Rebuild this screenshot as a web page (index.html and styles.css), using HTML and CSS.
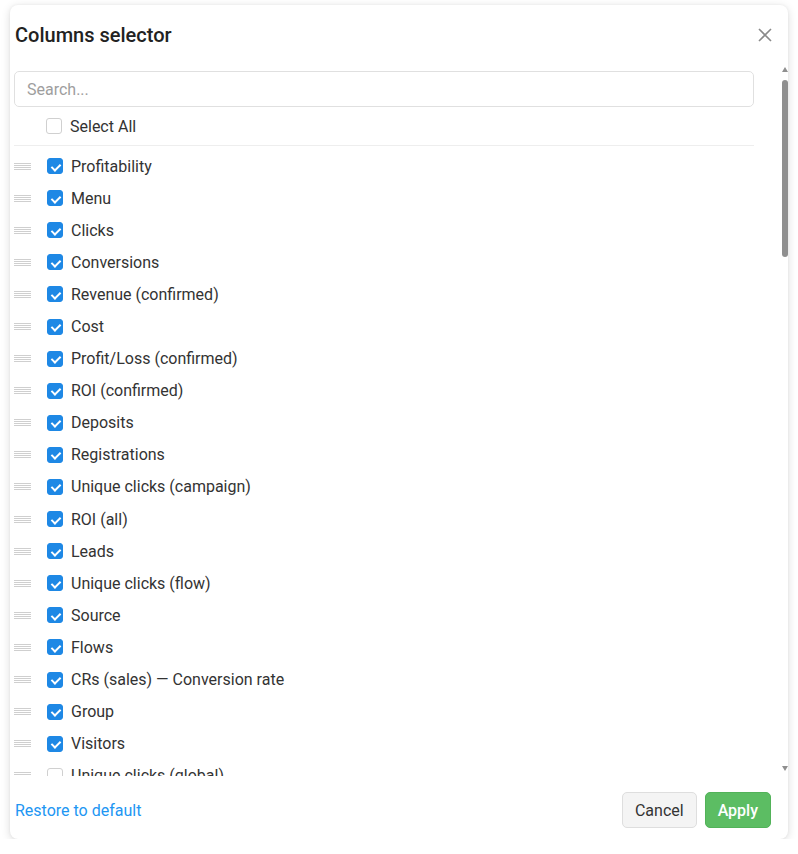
FILE: index.html
```html
<!DOCTYPE html>
<html lang="en">
<head>
<meta charset="utf-8">
<title>Columns selector</title>
<link rel="stylesheet" href="styles.css">
</head>
<body>
<div class="card">
  <div class="header">
    <h2 class="title">Columns selector</h2>
    <button class="close" aria-label="Close">
      <svg width="14" height="14" viewBox="0 0 14 14"><path d="M1 1L13 13M13 1L1 13" stroke="#8a8a8a" stroke-width="1.6" fill="none"/></svg>
    </button>
  </div>
  <div class="body">
    <div class="scroll">
      <input class="search" type="text" placeholder="Search...">
      <label class="select-all"><span class="cb"></span><span>Select All</span></label>
      <ul class="list">
        <li class="row"><span class="handle"></span><span class="cb on"></span><span>Profitability</span></li>
        <li class="row"><span class="handle"></span><span class="cb on"></span><span>Menu</span></li>
        <li class="row"><span class="handle"></span><span class="cb on"></span><span>Clicks</span></li>
        <li class="row"><span class="handle"></span><span class="cb on"></span><span>Conversions</span></li>
        <li class="row"><span class="handle"></span><span class="cb on"></span><span>Revenue (confirmed)</span></li>
        <li class="row"><span class="handle"></span><span class="cb on"></span><span>Cost</span></li>
        <li class="row"><span class="handle"></span><span class="cb on"></span><span>Profit/Loss (confirmed)</span></li>
        <li class="row"><span class="handle"></span><span class="cb on"></span><span>ROI (confirmed)</span></li>
        <li class="row"><span class="handle"></span><span class="cb on"></span><span>Deposits</span></li>
        <li class="row"><span class="handle"></span><span class="cb on"></span><span>Registrations</span></li>
        <li class="row"><span class="handle"></span><span class="cb on"></span><span>Unique clicks (campaign)</span></li>
        <li class="row"><span class="handle"></span><span class="cb on"></span><span>ROI (all)</span></li>
        <li class="row"><span class="handle"></span><span class="cb on"></span><span>Leads</span></li>
        <li class="row"><span class="handle"></span><span class="cb on"></span><span>Unique clicks (flow)</span></li>
        <li class="row"><span class="handle"></span><span class="cb on"></span><span>Source</span></li>
        <li class="row"><span class="handle"></span><span class="cb on"></span><span>Flows</span></li>
        <li class="row"><span class="handle"></span><span class="cb on"></span><span>CRs (sales) — Conversion rate</span></li>
        <li class="row"><span class="handle"></span><span class="cb on"></span><span>Group</span></li>
        <li class="row"><span class="handle"></span><span class="cb on"></span><span>Visitors</span></li>
        <li class="row"><span class="handle"></span><span class="cb"></span><span>Unique clicks (global)</span></li>
      </ul>
    </div>
    <div class="scrollbar" aria-hidden="true">
      <span class="arrow up"></span>
      <span class="track"><span class="thumb"></span></span>
      <span class="arrow down"></span>
    </div>
  </div>
  <div class="footer">
    <a class="restore" href="#">Restore to default</a>
    <div class="actions">
      <button class="btn btn-cancel">Cancel</button>
      <button class="btn btn-apply">Apply</button>
    </div>
  </div>
</div>
</body>
</html>
```

FILE: styles.css
```css
* { box-sizing: border-box; }
html, body { margin: 0; padding: 0; background: #fff; }
body {
  font-family: Roboto, "Liberation Sans", sans-serif;
  color: #333;
  font-size: 16px;
}
.card {
  margin: 5px 0 0 10px;
  width: 778px;
  height: 834px;
  background: #fff;
  border-radius: 8px;
  box-shadow: 0 2px 10px rgba(0, 0, 0, 0.14), 0 0 3px rgba(0, 0, 0, 0.05);
  display: flex;
  flex-direction: column;
  overflow: hidden;
}
.header {
  height: 58px;
  flex: none;
  display: flex;
  align-items: center;
  justify-content: space-between;
  padding: 1px 16px 0 5px;
}
.title {
  margin: 0;
  font-size: 20px;
  font-weight: 500;
  color: #222;
}
.close {
  border: 0;
  background: none;
  padding: 0;
  width: 14px;
  height: 14px;
  display: flex;
  cursor: pointer;
}
.body {
  flex: 1;
  min-height: 0;
  position: relative;
}
.scroll {
  height: 100%;
  overflow: hidden;
  padding: 8px 38px 0 4px;
}
.scrollbar {
  position: absolute;
  top: 0;
  right: 0;
  bottom: 0;
  width: 6px;
  display: flex;
  flex-direction: column;
}
.arrow {
  flex: none;
  height: 12px;
  display: flex;
  justify-content: center;
}
.arrow.up::before {
  content: "";
  margin-top: 4px;
  border-left: 3px solid transparent;
  border-right: 3px solid transparent;
  border-bottom: 5px solid #8f8f8f;
  height: 0;
}
.arrow.down {
  align-items: flex-end;
}
.arrow.down::before {
  content: "";
  margin-bottom: 5px;
  border-left: 3px solid transparent;
  border-right: 3px solid transparent;
  border-top: 5px solid #8f8f8f;
  height: 0;
}
.track {
  flex: 1;
  padding-top: 5px;
}
.thumb {
  display: block;
  height: 177px;
  background: #8f8f8f;
  border-radius: 3px;
}
.search {
  display: block;
  width: 740px;
  height: 36px;
  border: 1px solid #e0e0e0;
  border-radius: 5px;
  padding: 0 12px;
  font-family: inherit;
  font-size: 16px;
  color: #333;
  outline: none;
}
.search::placeholder { color: #9e9e9e; }
.select-all {
  display: flex;
  align-items: center;
  gap: 8px;
  height: 39px;
  padding: 0 0 0 32px;
  border-bottom: 1px solid #eeeeee;
  width: 740px;
}
.list {
  list-style: none;
  margin: 4px 0 0;
  padding: 0;
}
.row {
  display: flex;
  align-items: center;
  height: 32.1px;
}
.handle {
  width: 17px;
  height: 7px;
  margin-right: 16px;
  background: repeating-linear-gradient(to bottom, #cfcfcf 0, #cfcfcf 1px, transparent 1px, transparent 2px);
}
.cb {
  width: 16px;
  height: 16px;
  border: 1px solid #d0d0d0;
  border-radius: 3px;
  background: #fff;
  flex: none;
  position: relative;
}
.row .cb { margin-right: 8px; }
.cb.on {
  background: #1e88e5;
  border-color: #1e88e5;
}
.cb.on::after {
  content: "";
  position: absolute;
  left: 4.5px;
  top: 2.5px;
  width: 4px;
  height: 7px;
  border: solid #fff;
  border-width: 0 2px 2px 0;
  transform: rotate(45deg);
}
.footer {
  flex: none;
  display: flex;
  align-items: center;
  justify-content: space-between;
  padding: 16px 17px 11px 5px;
}
.restore {
  color: #2196f3;
  text-decoration: none;
  font-size: 16px;
}
.actions { display: flex; gap: 8px; }
.btn {
  height: 36px;
  padding: 0 12px;
  font-family: inherit;
  font-size: 16px;
  border-radius: 5px;
  cursor: pointer;
}
.btn-cancel {
  background: #f4f4f4;
  border: 1px solid #dedede;
  color: #333;
}
.btn-apply {
  background: #5cbd63;
  border: 1px solid #52b259;
  color: #fff;
  font-weight: 500;
}
```
